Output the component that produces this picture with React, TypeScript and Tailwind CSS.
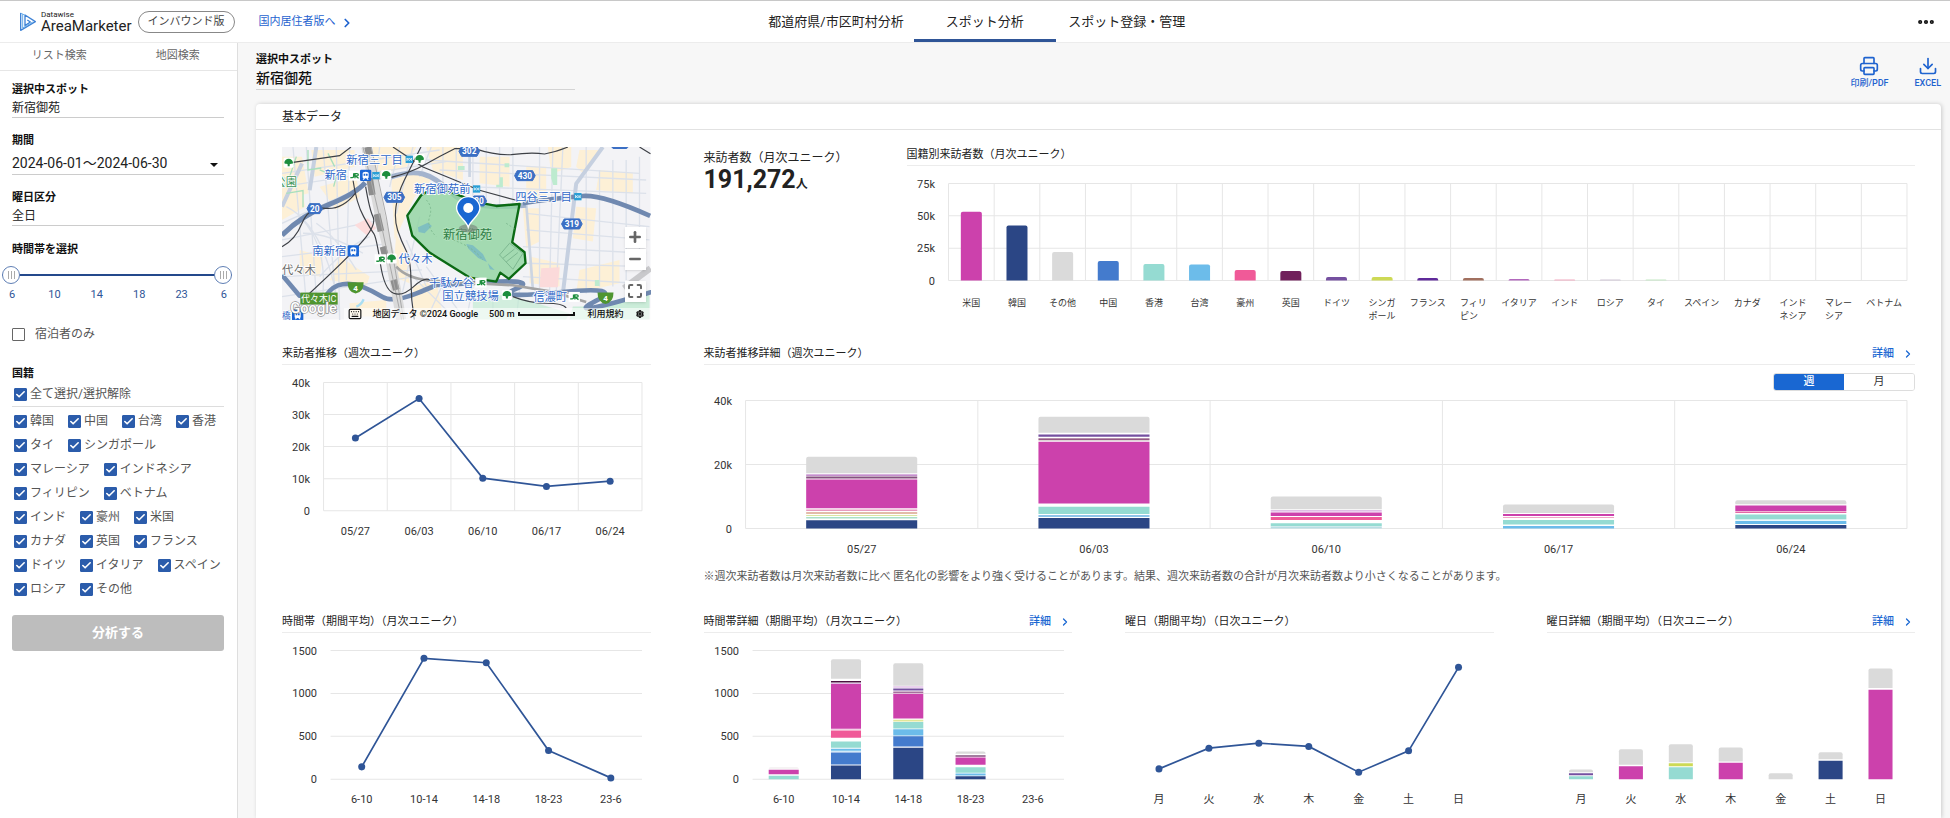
import { Fragment, useState } from "react";
import { Check, ChevronRight, Download, Ellipsis, Keyboard, Maximize, Minus, Plus, Printer, Settings } from "lucide-react";

const C = {
  magenta: "#cc41ac",
  navy: "#2b4685",
  grey: "#dadada",
  blue: "#447bcd",
  teal: "#95dbd2",
  sky: "#6cbcea",
  pink: "#f05a98",
  plum: "#71205b",
  purple: "#7550a0",
  lime: "#cdd955",
  violet: "#5f2a9a",
  brown: "#a1705f",
  orchid: "#b268bd",
  rose: "#f2a9bf",
  silver: "#cfc6d6",
  mint: "#c3e8c4",
  lilac: "#d6a6dd",
  mauve: "#85527f",
};

/** [from, to, colour], counted upwards from the axis. */
type Segment = [number, number, string];

/** Segment units per drawn pixel. */
const UNIT = 3;

type ChartProps = {
  label: string;
  width: number;
  height: number;
  plot: [number, number, number, number];
  ticks?: string[];
  tickX?: number;
  columns: string[];
  vertical?: boolean;
  labelOffset?: number;
  labelSize?: number;
  barWidth?: number;
  stacks?: Segment[][];
  line?: number[];
};

function Chart({
  label,
  width,
  height,
  plot: [x0, x1, y0, y1],
  ticks = [],
  tickX = 28,
  columns,
  vertical = false,
  labelOffset = 20,
  labelSize = 11,
  barWidth = 24,
  stacks = [],
  line = [],
}: ChartProps) {
  const step = (x1 - x0) / columns.length;
  const center = (i: number) => x0 + step * (i + 0.5);
  const tickY = (i: number) => y0 + ((y1 - y0) * i) / (ticks.length - 1);
  return (
    <svg viewBox={`0 0 ${width} ${height}`} role="img" aria-label={label} className="block h-auto w-full">
      {ticks.map((t, i) => (
        <Fragment key={t}>
          <line x1={x0} x2={x1} y1={tickY(i)} y2={tickY(i)} stroke="#e6e6e6" />
          <text x={tickX} y={tickY(i) + 4} textAnchor="end" fontSize={11} fill="#333">
            {t}
          </text>
        </Fragment>
      ))}
      {vertical &&
        [...columns, "end"].map((c, i) => (
          <line key={c} x1={x0 + step * i} x2={x0 + step * i} y1={y0} y2={y1} stroke="#e6e6e6" />
        ))}
      {stacks.map((segments, i) =>
        segments.map(([from, to, fill], j) => {
          const left = center(i) - barWidth / 2;
          const top = y1 - to / UNIT;
          const bottom = y1 - from / UNIT;
          const r = j === 0 ? Math.min(2, bottom - top) : 0;
          return (
            <path
              key={`${i}-${j}`}
              fill={fill}
              d={`M${left} ${bottom}V${top + r}q0 ${-r} ${r} ${-r}H${left + barWidth - r}q${r} 0 ${r} ${r}V${bottom}Z`}
            />
          );
        }),
      )}
      {line.length > 0 && (
        <polyline
          points={line.map((v, i) => `${center(i)},${y1 - v}`).join(" ")}
          fill="none"
          stroke="#2f5597"
          strokeWidth={1.7}
        />
      )}
      {line.map((v, i) => (
        <circle key={i} cx={center(i)} cy={y1 - v} r={3.5} fill="#2f5597" />
      ))}
      {columns.map((c, i) => {
        const rows = c.split("\n");
        const size = Math.max(...rows.map((r) => r.length)) * labelSize;
        return rows.map((row, j) => (
          <text
            key={`${c}-${j}`}
            x={rows.length > 1 ? center(i) - size / 2 : center(i)}
            y={y1 + labelOffset + 4 + j * 13}
            textAnchor={rows.length > 1 ? "start" : "middle"}
            fontSize={labelSize}
            fill="#333"
          >
            {row}
          </text>
        ));
      })}
    </svg>
  );
}

function SectionTitle({ children, detail = false }: { children: string; detail?: boolean }) {
  return (
    <div className="flex h-6 items-center justify-between border-b border-[#ececec] pt-[3px]">
      <h3 className="text-[11px] leading-4 text-[#222]">{children}</h3>
      {detail && (
        <a href="#detail" className="flex items-center gap-2 pr-[1px] text-[11px] leading-4 font-medium text-[#1967d2]">
          詳細
          <ChevronRight className="size-3" strokeWidth={2.5} />
        </a>
      )}
    </div>
  );
}

const nations: [string, number, string][] = [
  ["米国", 206, C.magenta],
  ["韓国", 165, C.navy],
  ["その他", 86, C.grey],
  ["中国", 59, C.blue],
  ["香港", 50, C.teal],
  ["台湾", 48, C.sky],
  ["豪州", 32, C.pink],
  ["英国", 29, C.plum],
  ["ドイツ", 11, C.purple],
  ["シンガ\nポール", 11, C.lime],
  ["フランス", 8, C.violet],
  ["フィリ\nピン", 8, C.brown],
  ["イタリア", 5, C.orchid],
  ["インド", 3, C.rose],
  ["ロシア", 3, C.silver],
  ["タイ", 3, C.mint],
  ["スペイン", 0, C.grey],
  ["カナダ", 0, C.grey],
  ["インド\nネシア", 0, C.grey],
  ["マレー\nシア", 0, C.grey],
  ["ベトナム", 0, C.grey],
];

const weeks = ["05/27", "06/03", "06/10", "06/17", "06/24"];
const hours = ["6-10", "10-14", "14-18", "18-23", "23-6"];
const days = ["月", "火", "水", "木", "金", "土", "日"];

const weekStacks: Segment[][] = [
  [
    [166, 215, C.grey],
    [158, 162, C.orchid],
    [150, 156, C.mauve],
    [61, 147, C.magenta],
    [53, 57, "#e79ac0"],
    [44, 50, "#e3bba9"],
    [38, 41, "#dbe5a0"],
    [30, 35, "#a9dfc9"],
    [0, 25, C.navy],
  ],
  [
    [287, 335, C.grey],
    [275, 282, C.purple],
    [266, 270, C.plum],
    [263, 265, "#b9a9a9"],
    [75, 260, C.magenta],
    [44, 65, C.teal],
    [35, 41, "#8fc4ea"],
    [0, 32, C.navy],
  ],
  [
    [58, 96, C.grey],
    [51, 55, C.lilac],
    [38, 48, C.magenta],
    [26, 35, C.pink],
    [7, 16, C.teal],
    [0, 6, "#b9dde4"],
  ],
  [
    [47, 72, C.grey],
    [38, 44, C.magenta],
    [32, 35, "#f0a9c6"],
    [12, 26, C.teal],
    [0, 8, C.sky],
  ],
  [
    [73, 85, C.grey],
    [53, 69, C.magenta],
    [47, 51, "#e36aa6"],
    [28, 42, C.teal],
    [25, 27, "#c2e6ea"],
    [14, 23, C.sky],
    [0, 11, C.navy],
  ],
];

const hourStacks: Segment[][] = [
  [
    [31, 36, "#f2f0f0"],
    [15, 28, C.magenta],
    [0, 10, C.teal],
  ],
  [
    [301, 359, C.grey],
    [290, 294, "#4b1040"],
    [286, 288, C.lilac],
    [151, 285, C.magenta],
    [148, 150, "#e8a3cd"],
    [124, 146, C.pink],
    [94, 113, C.teal],
    [85, 91, C.sky],
    [82, 84, "#a8d6f0"],
    [44, 80, C.blue],
    [0, 41, C.navy],
  ],
  [
    [280, 347, C.grey],
    [275, 278, C.lilac],
    [266, 272, C.purple],
    [258, 263, "#a5719d"],
    [182, 256, C.magenta],
    [173, 178, "#e0e79a"],
    [152, 171, C.teal],
    [131, 150, C.sky],
    [98, 129, C.blue],
    [0, 94, C.navy],
  ],
  [
    [76, 83, C.grey],
    [67, 72, C.mauve],
    [43, 65, C.magenta],
    [19, 36, C.teal],
    [11, 17, C.sky],
    [0, 9, C.navy],
  ],
];

const dayStacks: Segment[][] = [
  [
    [21, 29, C.grey],
    [12, 18, C.purple],
    [0, 9, C.teal],
  ],
  [
    [43, 90, C.grey],
    [0, 39, C.magenta],
  ],
  [
    [51, 105, C.grey],
    [39, 48, C.lime],
    [0, 36, C.teal],
  ],
  [
    [53, 95, C.grey],
    [0, 49, C.magenta],
  ],
  [[0, 18, C.grey]],
  [
    [60, 81, C.grey],
    [0, 55, C.navy],
  ],
  [
    [273, 332, C.grey],
    [0, 268, C.magenta],
  ],
];

function Tree({ x, y }: { x: number; y: number }) {
  return (
    <g transform={`translate(${x} ${y})`}>
      <rect x={-15} y={-15} width={30} height={30} rx={4} fill="#fff" />
      <path d="M0-12c7 0 13 6 13 12 0 3-3 4-6 3L3 5v6h-6V5l-4-2c-3 1-6 0-6-3 0-6 6-12 13-12Z" fill="#1e8e3e" />
    </g>
  );
}

function Rail({ x, y }: { x: number; y: number }) {
  return (
    <g transform={`translate(${x} ${y})`}>
      <rect x={-17} y={-17} width={34} height={34} rx={4} fill="#1a66d6" />
      <path d="M-9-6q0-5 9-5t9 5V6q0 3-3 3l3 4H5L2 9h-4l-3 4h-4l3-4q-3 0-3-3Z" fill="#fff" />
      <path d="M-6-5h5v6h-5ZM1-5h5v6H1Z" fill="#1a66d6" />
    </g>
  );
}

function Metro({ x, y }: { x: number; y: number }) {
  return (
    <g transform={`translate(${x} ${y})`}>
      <rect x={-11} y={-11} width={22} height={22} fill="#2a9fd6" />
      <path d="M-7-4v8l7-8 7 8v-8l-7 8Z" fill="none" stroke="#fff" strokeWidth={2} />
    </g>
  );
}

function JR({ x, y }: { x: number; y: number }) {
  return (
    <g transform={`translate(${x} ${y})`}>
      <rect x={-17} y={-15} width={34} height={30} fill="#fff" />
      <path d="M-12 6h6q4 0 4-4v-9M2 8v-14h6q4 0 4 3.500t-4 3.500H3l10 7" fill="none" stroke="#1e8e3e" strokeWidth={4} />
    </g>
  );
}

function Route({ x, y, n }: { x: number; y: number; n: string }) {
  const w = n.length > 2 ? 31 : 23;
  return (
    <g transform={`translate(${x} ${y})`}>
      <path d={`M${-w} 0l8-15H${w - 8}l8 15-8 15H${8 - w}Z`} fill="#3b6fc4" stroke="#3b6fc4" strokeWidth={3} strokeLinejoin="round" />
      <text y={9} textAnchor="middle" fontSize={25} fontWeight={700} fill="#fff">
        {n}
      </text>
    </g>
  );
}

function Expressway({ x, y }: { x: number; y: number }) {
  return (
    <g transform={`translate(${x} ${y})`}>
      <path d="M-24-17h48q0 30-24 34-24-4-24-34Z" fill="#4f9530" />
      <text y={8} textAnchor="middle" fontSize={24} fontWeight={700} fill="#fff">
        4
      </text>
    </g>
  );
}

const blocks = [
  "M127 200h60l20 110-80 20Z",
  "M215 180h130v50l-120 30Z",
  "M400 171h130l-30 60-100 30Z",
  "M560 171h110v100l-90-30Z",
  "M720 200h90v90l-90-10Z",
  "M127 330l60-20 10 40-70 40Z",
  "M240 290l110-30 10 60-70 40Z",
  "M455 270l70-20 60 10-60 60-60 130Z",
  "M470 430l30 60 10 90-50-20Z",
  "M860 230h60v100l-60-10Z",
  "M850 355h50v100l-40 20Z",
  "M925 171h70v60l-60 20Z",
  "M1020 180h60l-50 70-20-20Z",
  "M1080 240l100 10v60l-110-10Z",
  "M1010 350l60 5-10 100-60-10Z",
  "M870 500l90 20v70l-90-10Z",
  "M1020 540l120-30v70l-130 30Z",
  "M300 500l90 60-10 30-110-20Z",
  "M180 480l70 20-10 60-60-10Z",
  "M520 590l70-20 20 110H520Z",
  "M330 640l110-10v50H330Z",
];

const streets = [
  "M127 250 600 180M127 290 620 215M127 400l330-150M127 450l300-60M127 500l330-40M127 560l420-20M127 620l400-60",
  "M160 171 200 640M200 171l30 450M250 171l40 480M290 171l10 520M330 171l-10 400M180 380q100 100 60 300M140 350q120 60 160 320",
  "M230 400q60 40 120 140M190 430q80 0 180 60M240 560q80-90 150-120M420 171l-10 90M480 171l-30 120M520 171l-50 200",
  "M540 380 470 690M575 171 540 260M610 171v110M650 171v130M700 171v150M740 171v170M780 171v170M820 171v170",
  "M560 210l640 40M600 240l620 30M680 290l540 20M860 370l370 40M860 420l370 30M850 470l370 20M860 520l360 10M850 560l340 20",
  "M900 171v430M940 171l-10 440M970 171l-20 440M1040 171v440M1080 240v350M1120 210v380M1160 210v360M1200 200v330",
  "M520 560l120 120M560 530l110 150M620 560l-60 130M700 590l-20 100M760 600v90M840 600l-10 90M500 450l60 140",
];

function MapPanel() {
  return (
    <div className="relative mt-[5px] self-start overflow-hidden">
      <svg viewBox="127 171 1106 518" role="img" aria-label="新宿御苑の地図" className="block h-auto w-full">
        <rect x={127} y={171} width={1106} height={518} fill="#f3f3f6" />
        {blocks.map((d) => (
          <path key={d} d={d} fill="#fdf0d6" />
        ))}
        <g fill="none" stroke="#dce1ea" strokeWidth={4}>
          {streets.map((d) => (
            <path key={d} d={d} />
          ))}
        </g>
        <path d="M127 350l60-130M230 171l-20 130M1090 171l-80 110-40 330" fill="none" stroke="#c6d0e0" strokeWidth={12} />
        <path d="M860 340 880 600M690 171v90" fill="none" stroke="#ccd5e2" strokeWidth={8} />
        <g fill="#bdebcf">
          <path d="M935 235h18v50h-12l-6-20ZM780 262h10v30h-20v-8h10ZM795 220h14v12h-14ZM1066 570h14v18h-14ZM655 228h20v12h-20Z" />
          <path d="M700 600l160 30 130 40-10 19H700Z" opacity={0.6} />
          <path d="M1000 650l80 0 100-35 50-15v89h-240Z" opacity={0.75} />
          <path d="M131 262h40v32h-40Z" opacity={0.6} />
        </g>
        <g fill="none" stroke="#a9e0bd" strokeWidth={4}>
          <path d="M140 310l50-8v50M205 180v60l40-6M265 190l20 40M240 240l50 20-8 30M150 260l20-60M440 440l10 40" />
        </g>
        <path d="M345 405l40-20 25 30-30 20Z" fill="#fcdcdc" />
        <path d="M905 535l55-3-5 60h-55Z" fill="#fbdada" />
        <path d="M350 650q15-5 22-22" stroke="#a9def2" strokeWidth={7} fill="none" />

        <g fill="none" strokeLinejoin="round">
          <path d="M1233 535l-80 60" stroke="#c9c9cc" strokeWidth={18} />
          <path d="M127 436q60-60 140-92t110-66" stroke="#7089b0" strokeWidth={15} />
          <path d="M450 262q60-20 100-10t90 60 220 34" stroke="#a3b3cd" strokeWidth={15} />
          <path d="M850 340q80-14 180-22 60-4 202 60" stroke="#7089b0" strokeWidth={14} />
          <path d="M127 555l52 62h80q20-30 50-34t60 8 60 30 100-10 60-26 150-8 90 20 130 10 110 26 90-4 120-55" stroke="#7089b0" strokeWidth={14} />
        </g>

        <path d="M380 171l40 200 35 150 30 168" fill="none" stroke="#dadada" strokeWidth={30} />
        <path d="M384 171l6 28M390 265l8 50M412 372l12 52M430 470l10 40M462 570l8 30" fill="none" stroke="#8e8e8e" strokeWidth={20} />
        <path d="M370 171l50 210 66 308M395 171l45 210 52 308" fill="none" stroke="#a9a9a9" strokeWidth={3} />
        <path d="M470 530q30 34 100 42l250 14 120 20 100 30" fill="none" stroke="#a4a4a4" strokeWidth={8} />

        <g fill="none" stroke="#3d4046" strokeWidth={3.500}>
          <path d="M160 217l140-20 34-26" />
          <path d="M455 262q60-15 100-38t90-48h60q60 20 110 18 60-8 100-2 40-8 70-21" />
          <path d="M460 171l90 60 170 70 110 30M1200 171l33 20" />
          <path d="M544 171q-30 60-50 100t-25 80 5 70 25 60 15 90 10 118" />
          <path d="M340 270q10 70 32 110t30 50 20 90 40 90 60-20 50-20" />
          <path d="M378 290q12 70 22 90t-20 60-170 170" />
          <path d="M127 470q40-20 60-70t70-45 90-45" />
          <path d="M820 620q50 20 100 20t60 14" />
        </g>

        <path
          d="M590 290l-45 25-42 62 15 60 52 51 120 75 80 12 12-27 26 19 50-47-3-33-37-30 22-115-70 6-55-11Z"
          fill="#8fd3a0"
          fillOpacity={0.8}
          stroke="#0b6a14"
          strokeWidth={7}
          strokeLinejoin="round"
        />
        <path d="M535 412l30-14 12 10-22 22-18-4ZM680 462l20 4 30 26 12 24-26-12-30-28ZM745 520l20 20-14-2Z" fill="#7fbfc0" />
        <path d="M780 495l30-35 40 30-30 48ZM790 505l35-28M800 516l35-28" fill="none" stroke="#7db891" strokeWidth={3} />
        <path d="M560 330q20 20 10 50t20 60M640 450q60 20 90 60M800 400l30 20" fill="none" stroke="#78b48a" strokeWidth={2.500} strokeDasharray="6 6" />

        <Route x={689} y={184} n="302" />
        <Route x={856} y={257} n="430" />
        <Route x={464} y={322} n="305" />
        <Route x={225} y={356} n="20" />
        <Route x={997} y={402} n="319" />
        <Route x={718} y={333} n="20" />
        <path d="M1115 171h52l-6 6h-40Z" fill="#3b6fc4" />
        <Expressway x={348} y={594} />
        <Expressway x={1098} y={625} />
        <rect x={182} y={608} width={112} height={36} fill="#4f9530" />

        <g fontSize={34} fill="#3068c8" stroke="#fff" strokeWidth={5} strokeLinejoin="round" paintOrder="stroke">
          <text x={320} y={221}>新宿三丁目</text>
          <text x={255} y={268} fontSize={33}>新宿</text>
          <text x={523} y={308}>新宿御苑前</text>
          <text x={827} y={333}>四谷三丁目</text>
          <text x={218} y={495}>南新宿</text>
          <text x={477} y={520}>代々木</text>
          <text x={568} y={590}>千駄ケ谷</text>
          <text x={608} y={629}>国立競技場</text>
          <text x={881} y={633}>信濃町</text>
          <text x={127} y={686} fontSize={26}>橋</text>
          <text x={127} y={553} fill="#6b6b6b">代々木</text>
          <text x={104} y={288} fill="#3e9457">公園</text>
        </g>
        <text x={610} y={447} fontSize={37} fill="#2f7d45" stroke="#b9e5c3" strokeWidth={4} paintOrder="stroke">
          新宿御苑
        </text>
        <text x={184} y={637} fontSize={27} fill="#fff">
          代々木IC
        </text>
        <Tree x={147} y={218} />
        <Tree x={540} y={207} />
        <Tree x={440} y={255} />
        <Tree x={456} y={506} />
        <Tree x={802} y={615} />
        <Metro x={509} y={208} />
        <Metro x={409} y={257} />
        <Metro x={711} y={297} />
        <Metro x={1015} y={320} />
        <JR x={344} y={257} />
        <JR x={422} y={508} />
        <JR x={724} y={578} />
        <JR x={1004} y={621} />
        <Rail x={378} y={256} />
        <Rail x={341} y={483} />
        <Rail x={174} y={675} />
        <text x={152} y={670} fontSize={44} fontWeight={500} fill="#fff" stroke="#8b8b8b" strokeWidth={4} paintOrder="stroke">
          Google
        </text>

        <ellipse cx={686} cy={415} rx={28} ry={12} fill="#7c8c80" opacity={0.7} />
        <path d="M686 412c-6-22-35-34-35-57a35 35 0 0 1 70 0c0 23-29 35-35 57Z" fill="#1967d2" stroke="#fff" strokeWidth={4} />
        <circle cx={686} cy={354} r={15} fill="#fff" />
      </svg>
      <div className="absolute right-[5px] bottom-[18px] flex flex-col text-[#666]">
        <button type="button" aria-label="拡大" className="flex size-[21px] items-center justify-center bg-white shadow-sm">
          <Plus className="size-4" strokeWidth={4} />
        </button>
        <button type="button" aria-label="縮小" className="mt-[1px] flex size-[21px] items-center justify-center bg-white shadow-sm">
          <Minus className="size-4" strokeWidth={4} />
        </button>
        <button type="button" aria-label="全画面表示" className="mt-[11px] flex size-[21px] items-center justify-center bg-white shadow-sm">
          <Maximize className="size-4" strokeWidth={3} />
        </button>
      </div>
      <div className="absolute right-0 bottom-0 flex h-3 items-center bg-white/60 pr-[7px] pl-1 text-[9px] leading-3 font-medium text-[#111]">
        <Keyboard className="mr-[10px] size-[14px]" />
        <span>地図データ ©2024 Google</span>
        <span className="ml-[11px]">500 m</span>
        <span className="mr-3 ml-1 h-1 w-[57px] border-x-2 border-b-2 border-[#111]" />
        <a href="#terms">利用規約</a>
        <Settings className="ml-3 size-2" strokeWidth={4} />
      </div>
    </div>
  );
}

function Tick({ label, initial = true }: { label: string; initial?: boolean }) {
  const [on, setOn] = useState(initial);
  return (
    <label className="flex h-6 items-center gap-[3px] text-[12px] leading-4 text-[#555]">
      <span className="relative flex size-[13px]">
        <input
          type="checkbox"
          checked={on}
          onChange={() => setOn(!on)}
          className="peer size-[13px] appearance-none rounded-[1px] border border-[#666] bg-white checked:border-[#2b5cab] checked:bg-[#2b5cab]"
        />
        <Check className="pointer-events-none invisible absolute inset-[1px] size-[11px] text-white peer-checked:visible" strokeWidth={3.5} />
      </span>
      {label}
    </label>
  );
}

const countries = [
  "韓国", "中国", "台湾", "香港", "タイ", "シンガポール", "マレーシア", "インドネシア", "フィリピン", "ベトナム",
  "インド", "豪州", "米国", "カナダ", "英国", "フランス", "ドイツ", "イタリア", "スペイン", "ロシア", "その他",
];

const rangeClass =
  "pointer-events-none absolute inset-0 m-0 h-[18px] w-full appearance-none bg-transparent [&::-webkit-slider-thumb]:pointer-events-auto [&::-webkit-slider-thumb]:size-[18px] [&::-webkit-slider-thumb]:appearance-none [&::-webkit-slider-thumb]:rounded-full [&::-webkit-slider-thumb]:border [&::-webkit-slider-thumb]:border-[#5f7fb5] [&::-webkit-slider-thumb]:bg-white [&::-webkit-slider-thumb]:bg-[linear-gradient(90deg,transparent_5px,#aaa_5px,#aaa_6px,transparent_6px,transparent_8px,#aaa_8px,#aaa_9px,transparent_9px,transparent_11px,#aaa_11px,#aaa_12px,transparent_12px)] [&::-webkit-slider-thumb]:bg-[length:100%_8px] [&::-webkit-slider-thumb]:bg-center [&::-webkit-slider-thumb]:bg-no-repeat";

function Sidebar() {
  const [from, setFrom] = useState(0);
  const [to, setTo] = useState(5);
  return (
    <aside className="w-[238px] shrink-0 border-r border-[#dedede] bg-white">
      <div className="grid h-7 grid-cols-2 border-b border-[#e6e6e6] text-[11px] text-[#666]">
        <button type="button">リスト検索</button>
        <button type="button">地図検索</button>
      </div>
      <div className="px-3 pt-[11px] pr-[13px]">
        <h2 className="text-[11px] leading-4 font-bold text-[#111]">選択中スポット</h2>
        <p className="h-5 border-b border-[#ccc] text-[12px] leading-5 text-[#222]">新宿御苑</p>

        <label htmlFor="period" className="mt-[15px] block text-[11px] leading-4 font-bold text-[#111]">
          期間
        </label>
        <div className="relative">
          <select id="period" className="block h-[26px] w-full appearance-none rounded-none border-b border-[#ccc] bg-white pt-1 text-[14px] text-[#222]">
            <option>2024-06-01〜2024-06-30</option>
          </select>
          <svg viewBox="0 0 8 4" className="pointer-events-none absolute top-[14px] right-[6px] h-1 w-2" aria-hidden="true">
            <path d="M0 0h8L4 4Z" fill="#111" />
          </svg>
        </div>

        <h2 className="mt-[15px] text-[11px] leading-4 font-bold text-[#111]">曜日区分</h2>
        <p className="h-5 border-b border-[#ccc] text-[12px] leading-5 text-[#222]">全日</p>

        <h2 className="mt-4 text-[11px] leading-4 font-bold text-[#111]">時間帯を選択</h2>
        <div className="relative -mr-2 -ml-[10px] mt-2 h-[18px]">
          <div className="h-[10px] border-b-2 border-[#24498c]" />
          <input type="range" aria-label="開始時刻" min={0} max={5} value={from} onChange={(e) => setFrom(Number(e.target.value))} className={rangeClass} />
          <input type="range" aria-label="終了時刻" min={0} max={5} value={to} onChange={(e) => setTo(Number(e.target.value))} className={rangeClass} />
        </div>
        <div className="-mx-[10px] mt-[3px] flex justify-between text-[11px] leading-4 text-[#2f5597]">
          {["6", "10", "14", "18", "23", "6"].map((t, i) => (
            <span key={i} className="w-5 text-center">
              {t}
            </span>
          ))}
        </div>

        <div className="mt-[19px] [&>label]:gap-[10px]">
          <Tick label="宿泊者のみ" initial={false} />
        </div>
        <h2 className="mt-5 text-[11px] leading-4 font-bold text-[#111]">国籍</h2>
        <div className="border-b border-[#ddd] pl-[2px]">
          <Tick label="全て選択/選択解除" />
        </div>
        <div className="mt-[2px] flex flex-wrap gap-x-[14px] pl-[2px]">
          {countries.map((c) => (
            <Tick key={c} label={c} />
          ))}
        </div>
        <button type="button" className="mt-[14px] h-9 w-full rounded-[3px] bg-[#bdbdbd] text-[13px] font-bold text-white">
          分析する
        </button>
      </div>
    </aside>
  );
}

function Header() {
  return (
    <header className="grid h-[43px] grid-cols-[1fr_auto_1fr] border-t border-b border-t-[#c8c8c8] border-b-[#ececec] bg-white pr-[14px] pl-5">
      <div className="flex items-center">
        <svg viewBox="0 0 48 57" className="h-[19px] w-4" aria-hidden="true">
          <path d="M2 3v52L46 29 15 9v32l16-11-9-6" fill="none" stroke="#3f83d6" strokeWidth={4} strokeLinejoin="round" />
          <path d="M2 3l13 7M8 6v42l30-18" fill="none" stroke="#6fb0ea" strokeWidth={3} />
        </svg>
        <div className="ml-[5px] flex flex-col text-[#222]">
          <span className="text-[8px] leading-[8px]">Datawise</span>
          <span className="text-[15px] leading-[14px]">AreaMarketer</span>
        </div>
        <span className="ml-[6px] flex h-[22px] items-center rounded-full border border-[#888] px-[9px] pt-[1px] text-[11px] text-[#444]">インバウンド版</span>
        <a href="#domestic" className="ml-6 flex items-center gap-1 pt-[2px] text-[11px] text-[#1f63cf]">
          国内居住者版へ
          <ChevronRight className="size-[14px]" strokeWidth={3} />
        </a>
      </div>
      <nav className="flex text-[13px] text-[#222]">
        <a href="#area" className="flex min-w-[142px] items-center justify-center px-[10px]">
          都道府県/市区町村分析
        </a>
        <a href="#spot" className="flex min-w-[142px] items-center justify-center border-y-[3px] border-t-transparent border-b-[#2f5597] px-[10px]">
          スポット分析
        </a>
        <a href="#manage" className="flex min-w-[142px] items-center justify-center px-[10px]">
          スポット登録・管理
        </a>
      </nav>
      <button type="button" aria-label="メニュー" className="self-center justify-self-end">
        <Ellipsis className="size-5 text-[#111]" strokeWidth={3} />
      </button>
    </header>
  );
}

export default function App() {
  const [unit, setUnit] = useState("週");
  return (
    <div className="flex min-h-screen flex-col bg-[#f7f7f7] font-['Roboto','Noto_Sans_CJK_JP',sans-serif] text-[#222]">
      <Header />
      <div className="flex flex-1">
        <Sidebar />
        <main className="flex min-w-0 flex-1 flex-col pt-[9px] pr-[9px] pl-[18px]">
          <div className="flex justify-between">
            <div className="w-[319px] border-b border-[#d4d4d4]">
              <p className="text-[11px] leading-4 font-bold text-[#111]">選択中スポット</p>
              <h1 className="h-[21px] text-[14px] leading-5 font-medium text-[#111]">新宿御苑</h1>
            </div>
            <div className="flex gap-[26px] pt-1 text-[9px] leading-3 font-medium text-[#1f63cf]">
              <button type="button" className="flex flex-col items-center gap-[1px]">
                <Printer className="size-5" strokeWidth={2} />
                印刷/PDF
              </button>
              <button type="button" className="flex flex-col items-center gap-[1px]">
                <Download className="size-5" strokeWidth={2} />
                EXCEL
              </button>
            </div>
          </div>

          <section className="mt-[14px] flex-1 rounded-t-[4px] bg-white shadow-[1px_0_4px_rgba(0,0,0,0.18)]">
            <h2 className="h-[26px] border-b border-[#e2e2e2] px-[26px] text-[12px] leading-[27px] text-[#222]">基本データ</h2>
            <div className="grid grid-cols-4 gap-x-[53px] px-[26px] pt-3">
              <MapPanel />
              <div className="col-span-3 flex">
                <div className="w-[203px] shrink-0 pt-2">
                  <p className="text-[12px] leading-4">来訪者数（月次ユニーク）</p>
                  <p className="text-[25px] leading-7 font-bold">
                    191,272<span className="text-[12px]">人</span>
                  </p>
                </div>
                <div className="min-w-0 flex-1 pb-[15px]">
                  <SectionTitle>国籍別来訪者数（月次ユニーク）</SectionTitle>
                  <Chart
                    label="国籍別来訪者数"
                    width={1008}
                    height={160}
                    plot={[41.5, 999.5, 17.5, 114.5]}
                    ticks={["75k", "50k", "25k", "0"]}
                    columns={nations.map(([name]) => name)}
                    vertical
                    labelOffset={21}
                    labelSize={9}
                    barWidth={21}
                    stacks={nations.map(([, value, color]) => (value ? [[0, value, color]] : []))}
                  />
                </div>
              </div>

              <div>
                <SectionTitle>来訪者推移（週次ユニーク）</SectionTitle>
                <Chart
                  label="来訪者推移"
                  width={368}
                  height={180}
                  plot={[41.5, 359.5, 17.5, 145.5]}
                  ticks={["40k", "30k", "20k", "10k", "0"]}
                  columns={weeks}
                  vertical
                  line={[72.5, 112, 32.5, 24.2, 29.5]}
                />
              </div>
              <div className="col-span-3 pb-6">
                <SectionTitle detail>来訪者推移詳細（週次ユニーク）</SectionTitle>
                <div className="mt-2 flex justify-end">
                  <div className="grid h-[18px] w-[142px] grid-cols-2 overflow-hidden rounded-[3px] border border-[#ddd] text-[11px] leading-4">
                    {["週", "月"].map((u) => (
                      <button
                        key={u}
                        type="button"
                        aria-pressed={unit === u}
                        onClick={() => setUnit(u)}
                        className="bg-white text-[#333] aria-pressed:bg-[#1967d2] aria-pressed:font-medium aria-pressed:text-white"
                      >
                        {u}
                      </button>
                    ))}
                  </div>
                </div>
                <Chart
                  label="来訪者推移詳細"
                  width={1211}
                  height={174}
                  plot={[41.5, 1202.5, 9.5, 137.5]}
                  ticks={["40k", "20k", "0"]}
                  columns={weeks}
                  vertical
                  barWidth={111}
                  stacks={weekStacks}
                />
                <p className="mt-1 text-[11px] leading-4 text-[#555]">
                  ※週次来訪者数は月次来訪者数に比べ 匿名化の影響をより強く受けることがあります。結果、週次来訪者数の合計が月次来訪者数より小さくなることがあります。
                </p>
              </div>

              <div>
                <SectionTitle>時間帯（期間平均）（月次ユニーク）</SectionTitle>
                <Chart
                  label="時間帯"
                  width={368}
                  height={180}
                  plot={[48.5, 359.5, 17.5, 146]}
                  ticks={["1500", "1000", "500", "0"]}
                  tickX={35}
                  columns={hours}
                  line={[12.3, 120.7, 116.3, 28.7, 1.3]}
                />
              </div>
              <div>
                <SectionTitle detail>時間帯詳細（期間平均）（月次ユニーク）</SectionTitle>
                <Chart
                  label="時間帯詳細"
                  width={368}
                  height={180}
                  plot={[48.5, 359.5, 17.5, 146]}
                  ticks={["1500", "1000", "500", "0"]}
                  tickX={35}
                  columns={hours}
                  barWidth={30}
                  stacks={hourStacks}
                />
              </div>
              <div>
                <SectionTitle>曜日（期間平均）（日次ユニーク）</SectionTitle>
                <Chart
                  label="曜日"
                  width={368}
                  height={180}
                  plot={[9, 358, 17.5, 146]}
                  columns={days}
                  line={[10.3, 31, 36, 32.7, 7, 28.3, 111.7]}
                />
              </div>
              <div>
                <SectionTitle detail>曜日詳細（期間平均）（日次ユニーク）</SectionTitle>
                <Chart label="曜日詳細" width={368} height={180} plot={[9, 358, 17.5, 146]} columns={days} stacks={dayStacks} />
              </div>
            </div>
          </section>
        </main>
      </div>
    </div>
  );
}
